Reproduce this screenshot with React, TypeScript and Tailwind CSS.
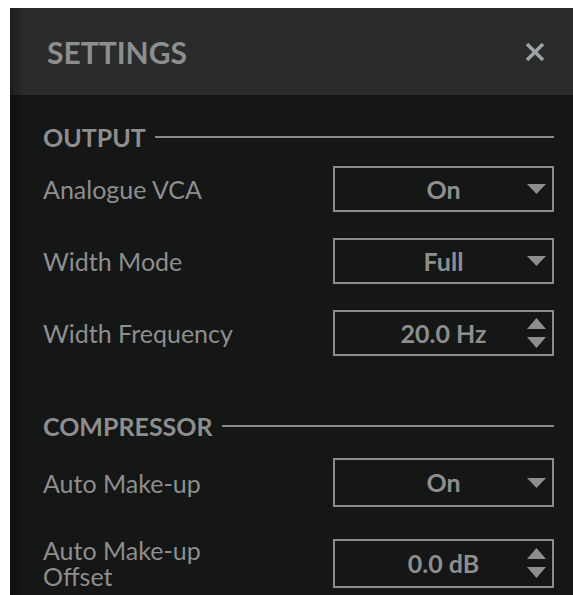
import type { ReactNode } from 'react';

type Control = 'select' | 'stepper';

interface Row {
  label: ReactNode;
  value: string;
  control: Control;
}

const output: Row[] = [
  { label: 'Analogue VCA', value: 'On', control: 'select' },
  { label: 'Width Mode', value: 'Full', control: 'select' },
  { label: 'Width Frequency', value: '20.0 Hz', control: 'stepper' },
];

const compressor: Row[] = [
  { label: 'Auto Make-up', value: 'On', control: 'select' },
  {
    label: (
      <>
        Auto Make-up
        <br />
        Offset
      </>
    ),
    value: '0.0 dB',
    control: 'stepper',
  },
];

function CaretDown() {
  return (
    <svg width="19" height="10" viewBox="0 0 19 10" className="block">
      <polygon points="0,0 19,0 9.5,10" fill="#8e8e8e" />
    </svg>
  );
}

function Stepper() {
  return (
    <div className="flex flex-col gap-[8px]">
      <svg width="19" height="11" viewBox="0 0 19 11" className="block">
        <polygon points="9.5,0 19,11 0,11" fill="#8e8e8e" />
      </svg>
      <svg width="19" height="11" viewBox="0 0 19 11" className="block">
        <polygon points="0,0 19,0 9.5,11" fill="#8e8e8e" />
      </svg>
    </div>
  );
}

function ValueBox({ value, control, tall }: { value: string; control: Control; tall?: boolean }) {
  return (
    <div
      className={
        (tall ? 'h-[49px] ' : 'h-[46px] ') +
        'relative w-[221px] shrink-0 border-2 border-[#8b8b8b] flex items-center justify-center'
      }
    >
      <span className="text-[25px] font-bold text-[#8e8e8e] leading-none">{value}</span>
      {/* arrows sit over the right end of the field */}
      <div className="absolute right-[6px] top-0 bottom-0 flex items-center">
        {control === 'select' ? <CaretDown /> : <Stepper />}
      </div>
    </div>
  );
}

function SectionTitle({ children }: { children: string }) {
  return (
    <div className="flex items-center gap-[9px] h-[28px]">
      <span className="text-[25px] font-bold text-[#8e8e8e] leading-[28px]">{children}</span>
      <div className="flex-1 h-[2px] bg-[#8a8a8a]" />
    </div>
  );
}

function SettingRow({ row, tall }: { row: Row; tall?: boolean }) {
  return (
    <div className="flex items-center justify-between">
      <span className="text-[25px] text-[#8e8e8e] leading-[26px]">{row.label}</span>
      <ValueBox value={row.value} control={row.control} tall={tall} />
    </div>
  );
}

export default function App() {
  return (
    <div className="w-[573px] h-[595px] bg-white pt-[8px] pl-[10px] overflow-hidden font-['Lato',sans-serif]">
      <div className="relative w-full h-full bg-[#151616] flex flex-col">
        {/* soft shadow along the left edge */}
        <div className="absolute left-0 top-0 bottom-0 w-[14px] bg-gradient-to-r from-black/35 to-transparent pointer-events-none" />

        <header className="h-[87px] shrink-0 bg-[#2a2b2b] flex items-center justify-between pl-[37px] pr-[27px]">
          <h1 className="text-[30px] font-bold text-[#8d8e8e] leading-none">SETTINGS</h1>
          <svg width="22" height="22" viewBox="0 0 22 22">
            <path d="M3 3 L19 19 M19 3 L3 19" stroke="#9ca2a5" strokeWidth="3.6" strokeLinecap="butt" />
          </svg>
        </header>

        <div className="pl-[33px] pr-[19px] pt-[28px] flex flex-col">
          <SectionTitle>OUTPUT</SectionTitle>
          <div className="flex flex-col gap-[26px] mt-[15px]">
            {output.map((row, i) => (
              <SettingRow key={i} row={row} />
            ))}
          </div>

          <div className="mt-[56px]">
            <SectionTitle>COMPRESSOR</SectionTitle>
          </div>
          <div className="flex flex-col gap-[30px] mt-[18px]">
            {compressor.map((row, i) => (
              <SettingRow key={i} row={row} tall />
            ))}
          </div>
        </div>
      </div>
    </div>
  );
}
